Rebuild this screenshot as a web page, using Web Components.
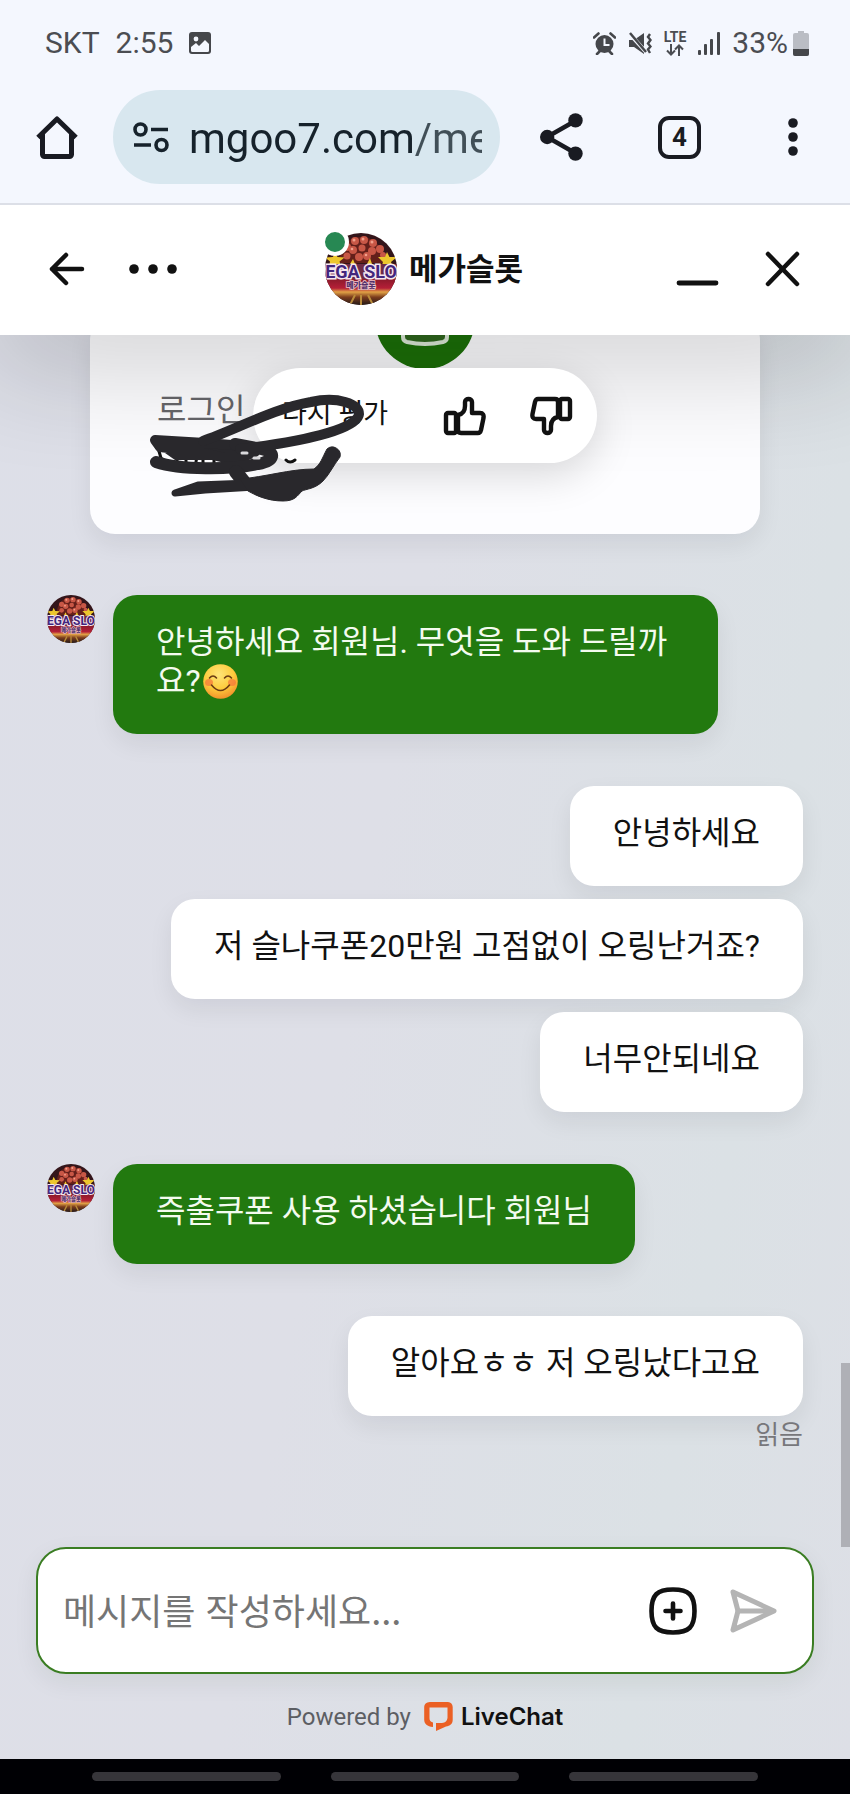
<!DOCTYPE html>
<html lang="ko">
<head>
<meta charset="utf-8">
<meta name="viewport" content="width=device-width, initial-scale=1">
<title>메가슬롯</title>
<style>
  body {
    margin: 0;
    min-height: 100vh;
    display: flex;
    flex-direction: column;
    font-family: Roboto, "Noto Sans CJK KR", sans-serif;
    color: #111;
    background: linear-gradient(100deg, #dddfe8 0%, #dedfe7 45%, #dbe1e5 80%, #dddfe6 100%);
  }
  chat-log { flex: 1; }
</style>
</head>
<body>
<status-bar></status-bar>
<browser-bar></browser-bar>
<chat-header>메가슬롯</chat-header>
<chat-log>
  <rating-card></rating-card>
  <chat-message from="agent" first>안녕하세요 회원님. 무엇을 도와 드릴까요?<smile-emoji></smile-emoji></chat-message>
  <chat-message first>안녕하세요</chat-message>
  <chat-message>저 슬나쿠폰20만원 고점없이 오링난거죠?</chat-message>
  <chat-message>너무안되네요</chat-message>
  <chat-message from="agent" first>즉출쿠폰 사용 하셨습니다 회원님</chat-message>
  <chat-message first>알아요ㅎㅎ 저 오링났다고요<span slot="status">읽음</span></chat-message>
</chat-log>
<chat-composer></chat-composer>
<powered-by></powered-by>
<nav-bar></nav-bar>

<script>
const define = (name, html) => {
  const template = document.createElement('template');
  template.innerHTML = html;
  customElements.define(name, class extends HTMLElement {
    constructor() {
      super();
      this.attachShadow({ mode: 'open' }).append(template.content.cloneNode(true));
    }
  });
};

const buttonReset = `
  button { appearance: none; border: 0; padding: 0; margin: 0; background: none; color: inherit; font: inherit; display: grid; place-items: center; }
  svg { display: block; }
`;

define('status-bar', `
  <style>
    :host { display: flex; justify-content: space-between; align-items: center; height: 86px; padding: 0 41px 0 45px; background: #f4f7fe; color: #4b4d52; font-size: 30px; line-height: 36px; }
    .side { display: flex; align-items: center; gap: 12px; }
    .side.start { gap: 16px; }
    svg { display: block; }
    .net { display: flex; flex-direction: column; align-items: center; font-size: 14px; line-height: 14px; font-weight: 700; }
    .power { display: flex; align-items: center; gap: 5px; }
  </style>
  <div class="side start">
    <span>SKT</span><span>2:55</span>
    <svg width="22" height="22" viewBox="0 0 22 22" role="img" aria-label="사진"><rect width="22" height="22" rx="3" fill="#45474b"/><circle cx="7" cy="7" r="2.400" fill="#f4f7fe"/><path d="M2 15l5-4 3 3 6-6 4 4v6.500a1.500 1.500 0 0 1-1.500 1.500h-15A1.500 1.500 0 0 1 2 18.500z" fill="#f4f7fe"/></svg>
  </div>
  <div class="side">
    <svg width="23" height="23" viewBox="0 0 23 23" fill="none" stroke="#45474b" role="img" aria-label="알람"><circle cx="11.500" cy="12" r="9" fill="#45474b" stroke="none"/><path d="M1 5.500L5.500 1.500M22 5.500L17.500 1.500M4 22l3-3M19 22l-3-3" stroke-width="2.600" stroke-linecap="round"/><path d="M11.500 6.500V13h5" stroke="#f4f7fe" stroke-width="2"/></svg>
    <svg width="24" height="23" viewBox="0 0 24 23" role="img" aria-label="진동"><path d="M1 8h5l10-7v21L6 15H1z" fill="#45474b"/><path d="M0 0l18 20" stroke="#f4f7fe" stroke-width="4"/><path d="M2 1l16 19" stroke="#45474b" stroke-width="2.500"/><path d="M22 2l-2 3 2.500 3-2.500 3.500 2.500 3-2.500 3 2 3.500" fill="none" stroke="#45474b" stroke-width="2.400"/></svg>
    <span class="net">LTE<svg width="18" height="12" viewBox="0 0 18 12" fill="none" stroke="#4b4d52" stroke-width="2"><path d="M5 0v10M1 6.500l4 4 4-4M13 12V2M9 5.500l4-4 4 4"/></svg></span>
    <svg width="22" height="23" viewBox="0 0 22 23" fill="#45474b" role="img" aria-label="신호"><rect y="18" width="3" height="5" rx="1"/><rect x="6" y="12" width="3" height="11" rx="1"/><rect x="12" y="7" width="3" height="16" rx="1"/><rect x="19" y="0" width="3" height="23" rx="1"/></svg>
    <span class="power">33%<svg width="16" height="25" viewBox="0 0 16 25"><path d="M5 0h6v2h3a2 2 0 0 1 2 2v19a2 2 0 0 1-2 2H2a2 2 0 0 1-2-2V4a2 2 0 0 1 2-2h3z" fill="#babdc4"/><path d="M0 18h16v5a2 2 0 0 1-2 2H2a2 2 0 0 1-2-2z" fill="#45474b"/></svg></span>
  </div>
`);

define('browser-bar', `
  <style>${buttonReset}
    :host { display: flex; align-items: center; padding: 4px 40px 19px 36px; background: #f4f7fe; border-bottom: 2px solid #dcdfe7; color: #191b22; }
    .home { width: 42px; margin-right: 35px; }
    .address { flex: 1; min-width: 0; height: 94px; box-sizing: border-box; display: flex; align-items: center; gap: 20px; padding: 0 18px 0 20px; border-radius: 47px; background: #d8e7ef; }
    .address button { flex: none; }
    input { flex: 1; min-width: 0; border: 0; padding: 4px 0 0; outline: 0; font: 42px/56px Roboto, sans-serif; color: #16222b; background: linear-gradient(90deg, #16222b 225px, #414f57 225px); background-clip: text; -webkit-background-clip: text; -webkit-text-fill-color: transparent; }
    .actions { display: flex; align-items: center; gap: 75px; margin-left: 40px; }
    .tabs { box-sizing: border-box; width: 43px; height: 43px; border: 4px solid #191b22; border-radius: 11px; font: 700 26px/34px Roboto, sans-serif; }
    .menu { width: 34px; }
  </style>
  <button class="home" aria-label="홈"><svg width="42" height="43" viewBox="0 0 42 43" fill="none" stroke="#191b22" stroke-width="5" stroke-linejoin="round"><path d="M2 21.500L21 3l19 18.500"/><path d="M6.500 18v20.500a2 2 0 0 0 2 2h25a2 2 0 0 0 2-2V18"/></svg></button>
  <div class="address">
    <button aria-label="사이트 정보"><svg width="36" height="31" viewBox="0 0 36 31" fill="none" stroke="#16222b" stroke-width="3.600"><circle cx="7.500" cy="7.500" r="5.500"/><path d="M18 7.500h17M1 23h17"/><circle cx="28.500" cy="23" r="5.500"/></svg></button>
    <input type="text" value="mgoo7.com/me" aria-label="주소" spellcheck="false">
  </div>
  <div class="actions">
    <button aria-label="공유"><svg width="43" height="48" viewBox="0 0 43 48" fill="#191b22"><path d="M36 7.500L7 24l29 16.500" fill="none" stroke="#191b22" stroke-width="4.500"/><circle cx="7.200" cy="24" r="7.200"/><circle cx="35.500" cy="7.400" r="7.200"/><circle cx="35.500" cy="40.600" r="7.200"/></svg></button>
    <button class="tabs" aria-label="탭 4개">4</button>
    <button class="menu" aria-label="메뉴"><svg width="10" height="38" viewBox="0 0 10 38" fill="#191b22"><circle cx="5" cy="5" r="4.800"/><circle cx="5" cy="19" r="4.800"/><circle cx="5" cy="33" r="4.800"/></svg></button>
  </div>
`);

define('brand-avatar', `
  <style>:host { display: block; width: 48px; height: 48px; border-radius: 50%; overflow: hidden; } svg { display: block; width: 100%; height: 100%; }</style>
  <svg viewBox="0 0 72 72" role="img" aria-label="메가슬롯 로고">
    <defs>
      <linearGradient id="floor" x1="0" y1="0" x2="0" y2="1"><stop offset="0" stop-color="#8c1a2b"/><stop offset=".35" stop-color="#b51f37"/><stop offset=".5" stop-color="#e2a245"/><stop offset=".7" stop-color="#7a3b1c"/><stop offset="1" stop-color="#231a17"/></linearGradient>
    </defs>
    <rect width="72" height="72" fill="#33151a"/>
    <path d="M14 30Q16 4 36 4t24 26z" fill="#641f1a"/>
    <g fill="#c85746"><circle cx="22" cy="14" r="4"/><circle cx="30" cy="8" r="4"/><circle cx="39" cy="7" r="4"/><circle cx="48" cy="10" r="4"/><circle cx="55" cy="16" r="4"/><circle cx="28" cy="17" r="4"/><circle cx="37" cy="15" r="3.500"/><circle cx="47" cy="18" r="4"/><circle cx="22" cy="23" r="3.500"/><circle cx="34" cy="24" r="4"/><circle cx="42" cy="23" r="4"/><circle cx="58" cy="22" r="3"/></g>
    <g fill="#f2a08c"><circle cx="29" cy="7" r="1.500"/><circle cx="38" cy="6" r="1.500"/><circle cx="47" cy="9" r="1.500"/><circle cx="41" cy="22" r="1.300"/><circle cx="27" cy="16" r="1.300"/></g>
    <path d="M10 19l2.500 5 7 .5-5 4 2 6H4l1-6-5-4 8-.5zM62 19l2.500 5h7.500l-6 5 2 6H56l2-6-5-5 7 0zM28 26l2 5h-5zM45 25l2 6h-5z" fill="#edc72e"/>
    <path d="M0 31h72v16H0z" fill="#6d2a45"/>
    <rect y="46" width="72" height="26" fill="url(#floor)"/>
    <text x="36" y="45" text-anchor="middle" font-family="Roboto, sans-serif" font-weight="700" font-size="18" fill="#43267d" stroke="#f6e6ee" stroke-width="3" paint-order="stroke">EGA SLO</text>
    <text x="36" y="55" text-anchor="middle" font-family="Noto Sans CJK KR, sans-serif" font-weight="900" font-size="8" fill="#54316b" stroke="#f0c7cc" stroke-width="1.500" paint-order="stroke">메가슬롯</text>
    <path d="M30 62l-5 10M36 62v10M43 62l5 10" stroke="#b98b3a" stroke-width="2"/>
  </svg>
`);

define('chat-header', `
  <style>${buttonReset}
    :host { display: grid; grid-template-columns: 1fr auto 1fr; align-items: center; height: 130px; box-sizing: border-box; padding: 0 50px 2px 48px; background: #fff; }
    .group { display: flex; align-items: center; gap: 44px; }
    .group.end { justify-content: flex-end; gap: 46px; }
    .brand { display: flex; align-items: center; gap: 12px; }
    .face { position: relative; }
    brand-avatar { width: 72px; height: 72px; }
    .online { position: absolute; left: -4px; top: -5px; width: 20px; height: 20px; border: 4px solid #fff; border-radius: 50%; background: #278853; }
    h1 { margin: 0; padding-bottom: 4px; font: 700 31px/40px "Noto Sans CJK KR", sans-serif; }
  </style>
  <div class="group">
    <button aria-label="뒤로"><svg width="37" height="36" viewBox="0 0 37 36" fill="none" stroke="#111" stroke-width="4.500" stroke-linecap="round" stroke-linejoin="round"><path d="M34 18H4M18 4L4 18l14 14"/></svg></button>
    <button aria-label="더 보기"><svg width="48" height="10" viewBox="0 0 48 10" fill="#111"><circle cx="5" cy="5" r="4.800"/><circle cx="24" cy="5" r="4.800"/><circle cx="43" cy="5" r="4.800"/></svg></button>
  </div>
  <div class="brand">
    <div class="face"><brand-avatar></brand-avatar><span class="online"></span></div>
    <h1><slot></slot></h1>
  </div>
  <div class="group end">
    <button aria-label="최소화"><svg width="43" height="36" viewBox="0 0 43 36" stroke="#111" stroke-width="4.800" stroke-linecap="round"><path d="M3 32h37"/></svg></button>
    <button aria-label="닫기"><svg width="35" height="36" viewBox="0 0 35 36" stroke="#111" stroke-width="4.500" stroke-linecap="round"><path d="M3 3l29 30M32 3L3 33"/></svg></button>
  </div>
`);

define('chat-log', `
  <style>
    :host { position: relative; display: flex; flex-direction: column; overflow: hidden; padding: 0 47px 91px; }
    .shade { position: absolute; z-index: 1; left: 0; right: 0; top: -40px; height: 40px; box-shadow: 0 0 120px 10px rgba(0, 0, 0, .32); pointer-events: none; }
    .thumb { position: absolute; right: 0; bottom: 0; width: 9px; height: 184px; background: #afb0b6; }
  </style>
  <div class="shade"></div>
  <slot></slot>
  <div class="thumb"></div>
`);

define('rating-card', `
  <style>${buttonReset}
    :host { position: relative; display: block; box-sizing: border-box; height: 219px; margin: -20px 43px 9px; padding: 75px 67px 0; border-radius: 25px; background: #fdfdff; box-shadow: 0 10px 24px rgba(0, 20, 30, .07); }
    .label { font-size: 32px; line-height: 40px; color: #66666a; }
    .icon { position: absolute; left: 50%; top: -46px; margin-left: -50px; }
    .rate { position: absolute; z-index: 2; left: 163px; top: 53px; box-sizing: border-box; width: 344px; height: 95px; padding: 0 24px 0 29px; display: flex; align-items: center; justify-content: space-between; border-radius: 48px; background: #fff; box-shadow: 0 12px 40px rgba(0, 0, 0, .15); font-size: 27px; line-height: 38px; }
    .rate span { padding-bottom: 4px; }
    .thumbs { display: flex; gap: 44px; }
    .ink { position: absolute; z-index: 3; left: 50px; top: 75px; }
  </style>
  <svg class="icon" width="100" height="100" viewBox="0 0 100 100"><circle cx="50" cy="50" r="50" fill="#1c7008"/><path d="M28 40v28q0 4 4 5q18 4 36 0q4-1 4-5V40" fill="#2e651d" stroke="#dbe8d7" stroke-width="4"/></svg>
  <div class="label">로그인</div>
  <div class="rate">
    <span>다시 평가</span>
    <div class="thumbs">
      <button aria-label="좋아요"><svg width="43" height="40" viewBox="0 0 43 40" fill="none" stroke="#111" stroke-width="4.400" stroke-linejoin="round"><rect x="3" y="17" width="10" height="20" rx="2"/><path d="M15 19c5-1 7-4 7-9V6c0-4 7-4 7 0v11h8c3 0 4 2 3.500 5L38 34c-.5 2-1.500 3-3 3H18c-2 0-3-1-3-3V21z"/></svg></button>
      <button aria-label="싫어요"><svg width="43" height="40" viewBox="0 0 43 40" fill="none" stroke="#111" stroke-width="4.400" stroke-linejoin="round"><rect x="30" y="3" width="10" height="20" rx="2"/><path d="M28 21c-5 1-7 4-7 9v4c0 4-7 4-7 0V23H6c-3 0-4-2-3.500-5L5 6c.5-2 1.500-3 3-3h17c2 0 3 1 3 3v13z"/></svg></button>
    </div>
  </div>
  <svg class="ink" width="220" height="120" viewBox="140 390 220 120" overflow="visible" fill="none" stroke="#29282c" stroke-linecap="round" stroke-linejoin="round">
    <path d="M158 448l3 10 4 3M177 455v8M186 455v8M196 462q0-6 7-5v6M214 457v6M286 460q4 4 9 0" stroke="#111" stroke-width="3"/>
    <path d="M155 440L205 443L245 446L255 452L240 458L225 458L200 452L160 447z" fill="#29282c" stroke-width="10"/>
    <path d="M156 462C180 470 230 470 258 464C275 461 277 452 262 449L235 444" stroke-width="12"/>
    <path d="M165 453H230V460H175z" fill="#29282c" stroke="none"/>
    <path d="M203 441C235 430 275 408 311 402C338 396 359 404 359 414C358 427 315 440 240 449" stroke-width="10"/>
    <path d="M236 472L244 482" stroke-width="14"/>
    <path d="M175 493L198 485L250 483L255 487L205 490z" fill="#29282c" stroke-width="7"/>
    <path d="M240 479C265 477 290 469 314 469C321 464 322 458 327 449A8 8 0 0 1 340 457C333 466 329 475 323 481C315 489 306 489 302 491C297 496 295 501 283 501C268 501 257 496 248 491z" fill="#29282c" stroke-width="1"/>
    <path d="M242 453h5M254 458h5" stroke="#d9d9dc" stroke-width="3"/>
  </svg>
`);

define('smile-emoji', `
  <style>:host { display: inline-block; width: 35px; height: 35px; margin-left: 2px; vertical-align: -7px; } svg { display: block; }</style>
  <svg width="35" height="35" viewBox="0 0 35 35" role="img" aria-label="😊">
    <defs><radialGradient id="skin" cx=".45" cy=".3" r=".7"><stop offset="0" stop-color="#ffe579"/><stop offset=".6" stop-color="#fdcb3c"/><stop offset="1" stop-color="#f2922b"/></radialGradient></defs>
    <circle cx="17.500" cy="17.500" r="17.300" fill="url(#skin)"/>
    <ellipse cx="6" cy="18.500" rx="4" ry="3.500" fill="#f5743b" opacity=".7"/><ellipse cx="29" cy="18.500" rx="4" ry="3.500" fill="#f5743b" opacity=".7"/>
    <path d="M6.500 14q3.500-4 7 0M21.500 14q3.500-4 7 0M8.500 21q9 11 18 0" fill="none" stroke="#6b3b13" stroke-width="1.600" stroke-linecap="round"/>
  </svg>
`);

define('chat-message', `
  <style>
    :host { display: grid; justify-items: end; margin-top: 13px; }
    :host([first]) { margin-top: 52px; }
    .row { display: flex; align-items: flex-start; gap: 18px; max-width: 671px; }
    brand-avatar { display: none; flex: none; }
    .bubble { max-width: 605px; box-sizing: border-box; padding: 28px 43px 33px; border-radius: 24px; background: #fff; color: #111; font-size: 32px; line-height: 39px; word-break: break-all; box-shadow: 0 10px 24px rgba(0, 20, 30, .07); }
    :host(:not([from])) .bubble { max-width: 671px; }
    :host([from="agent"]) { justify-items: start; }
    :host([from="agent"]) brand-avatar { display: block; }
    :host([from="agent"]) .bubble { background: #22790f; color: #f4fbef; }
    ::slotted([slot="status"]) { font-size: 26px; line-height: 38px; color: #77777b; }
  </style>
  <div class="row"><brand-avatar></brand-avatar><div class="bubble"><slot></slot></div></div>
  <slot name="status"></slot>
`);

define('chat-composer', `
  <style>${buttonReset}
    :host { display: block; padding: 0 36px; }
    form { margin: 0; display: flex; align-items: center; gap: 32px; height: 127px; box-sizing: border-box; padding: 0 35px 0 25px; border: 2px solid #3a7d22; border-radius: 30px; background: #fff; box-shadow: 0 8px 24px rgba(0, 40, 20, .07); }
    input { flex: 1; min-width: 0; border: 0; outline: 0; padding: 0 0 4px; background: none; font: 36px/52px "Noto Sans CJK KR", sans-serif; color: #111; }
    input::placeholder { color: #757575; opacity: 1; }
  </style>
  <form>
    <input type="text" placeholder="메시지를 작성하세요..." aria-label="메시지">
    <button type="button" aria-label="첨부"><svg width="48" height="48" viewBox="0 0 48 48" fill="none" stroke="#111" stroke-width="4.600" stroke-linecap="round"><path d="M24 2.500C40 2.500 45.500 8 45.500 24S40 45.500 24 45.500 2.500 40 2.500 24 8 2.500 24 2.500z"/><path d="M24 16.500v15M16.500 24h15"/></svg></button>
    <button type="submit" aria-label="보내기"><svg width="48" height="46" viewBox="0 0 48 46" fill="none" stroke="#b4b4b4" stroke-width="5" stroke-linecap="round" stroke-linejoin="round"><path d="M4 4l41 19L4 42l5-19z"/><path d="M9 23h34"/></svg></button>
  </form>
`);

define('powered-by', `
  <style>
    :host { display: flex; justify-content: center; height: 85px; }
    a { display: flex; align-items: center; gap: 13px; color: #5c5e63; text-decoration: none; font: 24px/32px Roboto, sans-serif; }
    .name { display: flex; align-items: center; gap: 8px; color: #111; font: 600 24px/32px Inter, sans-serif; }
    svg { display: block; }
  </style>
  <a href="#livechat">Powered by <span class="name"><svg width="29" height="29" viewBox="0 0 29 29"><path d="M6 0C12 -.3 18 -.3 24 0C27 .3 28.500 2 28.700 5V18C28.500 22 26 24 22 24.500L12 29V21H18C21.500 20.500 23 19 23.500 16V5.500H5.500V16C5.500 18 6 19.500 9 20.500V25C3 24.500 .5 22 .2 18V5C.5 2 2 .3 6 0z" fill="#eb6024"/></svg>LiveChat</span></a>
`);

define('nav-bar', `
  <style>
    :host { display: flex; justify-content: center; align-items: center; gap: 50px; height: 35px; padding: 0 92px; background: #000004; }
    button { appearance: none; flex: 1; height: 9px; padding: 0; border: 0; border-radius: 5px; background: #36353a; }
  </style>
  <button aria-label="최근 앱"></button><button aria-label="홈"></button><button aria-label="뒤로"></button>
`);
</script>
</body>
</html>
